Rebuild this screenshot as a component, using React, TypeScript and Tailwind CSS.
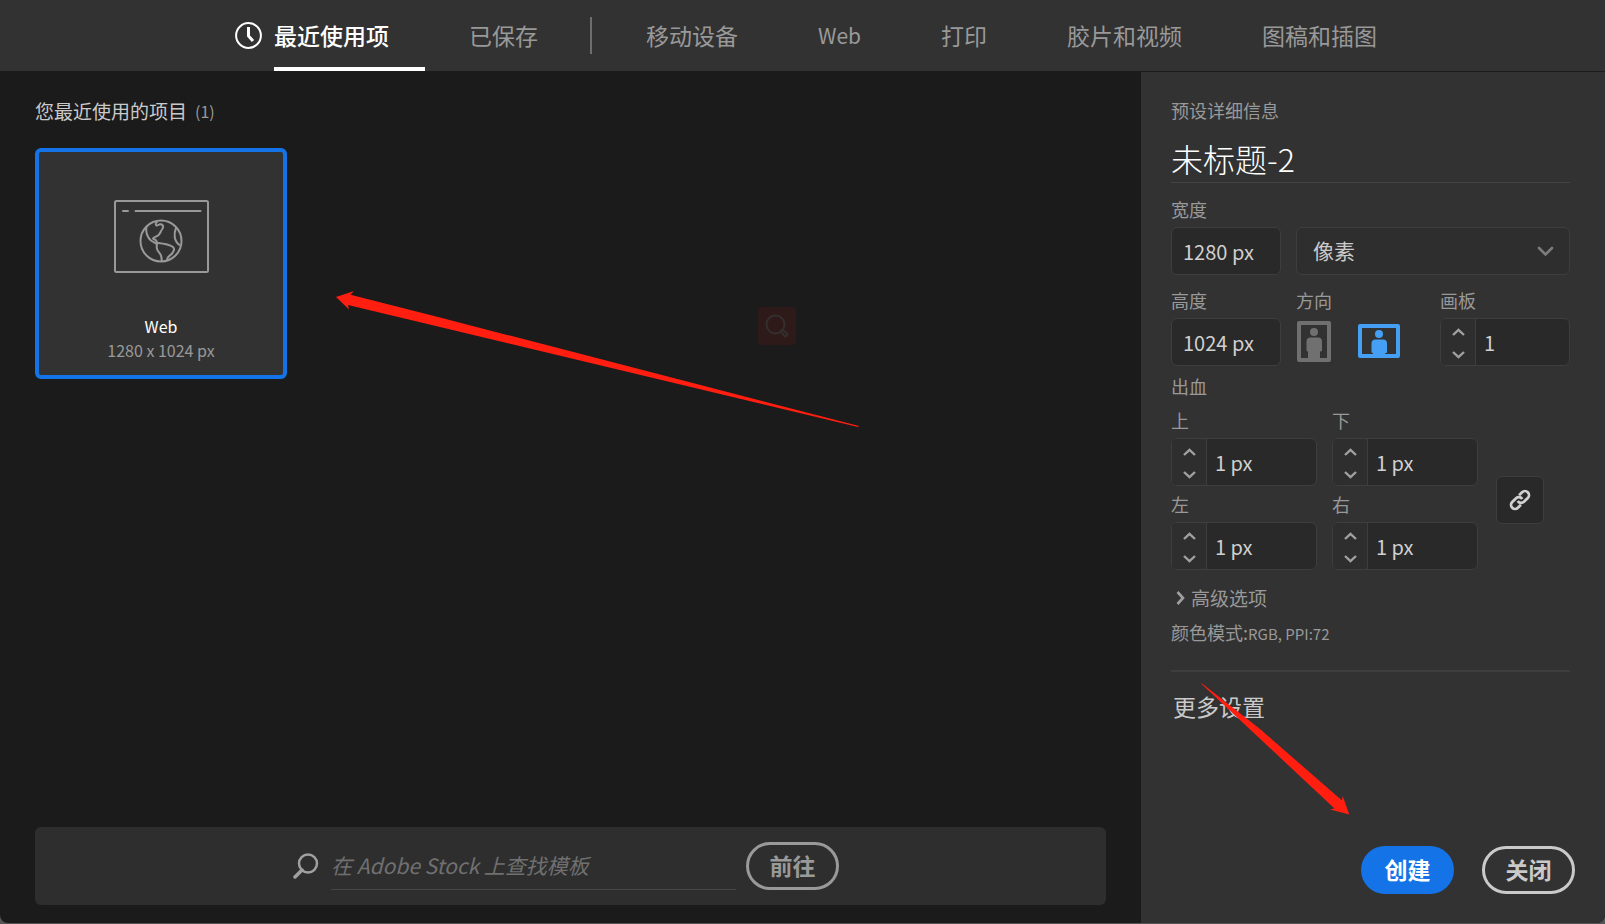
import { useState } from "react";

const tabs = [
  { label: "最近使用项", className: "ml-3 text-[23px]" },
  { label: "已保存", className: "ml-11 text-[23px]" },
  { label: "移动设备", className: "ml-[54px] text-[23px]" },
  { label: "Web", className: "ml-20 text-[21px]" },
  { label: "打印", className: "ml-20 text-[23px]" },
  { label: "胶片和视频", className: "ml-20 text-[23px]" },
  { label: "图稿和插图", className: "ml-20 text-[23px]" },
];

const RED = "#ff1e10";

function ClockIcon() {
  return (
    <svg width="27" height="27" viewBox="0 0 27 27" fill="none" stroke="#fff" strokeWidth="2" aria-hidden="true">
      <circle cx="13.5" cy="13.5" r="12.4" />
      <path d="M13.5 5v9l4.5 5" strokeWidth="3" />
    </svg>
  );
}

function WebPresetIcon() {
  return (
    <svg width="95" height="73" viewBox="0 0 95 73" fill="none" stroke="#999" strokeWidth="2" strokeLinecap="round" strokeLinejoin="round" aria-hidden="true">
      <rect x="1" y="1" width="93" height="71" rx="1.5" />
      <path d="M9 11h5M21.500 11h65" />
      <circle cx="47" cy="41" r="20.500" />
      <path d="M43 22c-1.500 1-1.500 2.500-.5 3.500 1.500.5 2-1.500 4-1.200 3.500.5 3 3 1.500 5.200-1.500 2-1.500 4-4 6-2 1.500-4.500 1.500-5 3 .5 1.500 2.500.5 3 2l1.500 2.500c5 .5 11 1 15.500 4 2.500 2.500.5 3.500-.5 6-1.500 2.500-5 2.500-5.500 7" />
      <path d="M32.500 27c-1 5 1 11 4.500 13.500 3 2 6 3 6 4.500-1 3 0 4 1 6 2 3 4.500 4 3.500 10" />
      <path d="M62 28c-2.500 6-2 13 3.500 17" />
    </svg>
  );
}

function PortraitIcon() {
  return (
    <svg width="34" height="41" viewBox="0 0 34 41" aria-hidden="true">
      <path d="M2 2h30v37H2z" fill="none" stroke="#707070" strokeWidth="4" strokeLinejoin="round" />
      <circle cx="17" cy="11" r="4" fill="#707070" />
      <path d="M13 16.500h8a4 4 0 0 1 4 4V29a1.500 1.500 0 0 1-2 1.500V38H11v-7.500A1.500 1.500 0 0 1 9.500 29v-8.500a4 4 0 0 1 3.500-4z" fill="#707070" />
    </svg>
  );
}

function LandscapeIcon() {
  return (
    <svg width="42" height="34" viewBox="0 0 42 34" aria-hidden="true">
      <path d="M2 2h38v30H2z" fill="none" stroke="#459ff5" strokeWidth="4" strokeLinejoin="round" />
      <circle cx="21" cy="10" r="4" fill="#459ff5" />
      <path d="M17 15.500h8a4 4 0 0 1 4 4V27a1.500 1.500 0 0 1-2 2v3H15v-3a1.500 1.500 0 0 1-1.500-2v-7.500a4 4 0 0 1 3.500-4z" fill="#459ff5" />
    </svg>
  );
}

function Caret({ up = false }: { up?: boolean }) {
  return (
    <svg width="13" height="8" viewBox="0 0 13 8" fill="none" stroke="#a0a0a0" strokeWidth="2.400" aria-hidden="true">
      <path d={up ? "M1 7l5.500-5.200L12 7" : "M1 1l5.500 5.200L12 1"} />
    </svg>
  );
}

function Stepper({ id, label, value, className }: { id: string; label: string; value: string; className: string }) {
  return (
    <div className={className}>
      <label htmlFor={id} className="block h-7 text-lg leading-5">{label}</label>
      <div className="flex h-12 overflow-hidden rounded-md border border-[#3e3e3e] bg-[#292929]">
        <div className="flex w-[35px] shrink-0 flex-col border-r border-[#3e3e3e] bg-[#2e2e2e]">
          <button type="button" aria-label={`${label} +`} className="flex flex-1 items-center justify-center pt-0.5"><Caret up /></button>
          <button type="button" aria-label={`${label} -`} className="flex flex-1 items-center justify-center pt-0.5"><Caret /></button>
        </div>
        <input id={id} defaultValue={value} className="w-full min-w-0 bg-transparent px-2 pt-0.5 text-xl text-[#d0d0d0] outline-none" />
      </div>
    </div>
  );
}

function SizeField({ id, label, value }: { id: string; label: string; value: string }) {
  return (
    <div className="w-[110px]">
      <label htmlFor={id} className="block h-7 text-lg leading-5">{label}</label>
      <input id={id} defaultValue={value} className="block h-12 w-full rounded-md border border-[#3e3e3e] bg-[#292929] px-[11px] text-xl text-[#d0d0d0] outline-none" />
    </div>
  );
}

function TopTabs() {
  const [active, setActive] = useState(0);
  return (
    <nav className="flex h-[71px] shrink-0 items-center whitespace-nowrap bg-[#323232] pl-[235px]">
      <ClockIcon />
      {tabs.map((tab, i) => (
        <div key={tab.label} className={`flex h-full items-center ${tab.className}`}>
          <button
            type="button"
            onClick={() => setActive(i)}
            className={`h-full border-y-4 border-t-transparent ${i === 0 ? "w-[151px] text-left" : ""} ${i === active ? "border-b-white font-medium text-white" : "border-b-transparent text-[#999]"}`}
          >
            {tab.label}
          </button>
          {i === 1 && <span className="ml-13 h-[37px] w-0.5 bg-[#6e6e6e]" />}
        </div>
      ))}
    </nav>
  );
}

function RecentPanel() {
  return (
    <main className="relative flex min-w-0 flex-1 flex-col px-[35px] pb-[18px] pt-7">
      <h2 className="flex h-6 items-center gap-2 text-[19px] text-[#cacaca]">
        您最近使用的项目 <span className="text-base text-[#999]">(1)</span>
      </h2>
      <button type="button" className="mt-[25px] flex h-[231px] w-[252px] flex-col items-center rounded-md border-4 border-[#1473e6] bg-[#323232] pt-12">
        <WebPresetIcon />
        <span className="mt-[41px] text-base leading-6 text-white">Web</span>
        <span className="text-base leading-6 text-[#999]">1280 x 1024 px</span>
      </button>

      <div className="absolute left-[758px] top-[236px] flex size-[38px] items-center justify-center rounded bg-[#2f1a1a]">
        <svg width="24" height="24" viewBox="0 0 24 24" fill="none" stroke="#342f2f" strokeWidth="2" aria-hidden="true">
          <circle cx="10.500" cy="10.500" r="9" />
          <path d="M15.500 17.500l2-2 4.500 4a1.800 1.800 0 0 1-2.500 2.500z" />
        </svg>
      </div>
      <svg className="pointer-events-none absolute left-[335px] top-[219px]" width="525" height="138" viewBox="0 0 525 138" aria-hidden="true">
        <path d="M1 7L19 1l-3.500 3.700L105 27.500 524 136l-1 1L105 37 13 15l1 4.500z" fill={RED} />
      </svg>

      <form className="mt-auto flex h-[78px] items-center rounded-md bg-[#2e2e2e] pl-[258px]" onSubmit={(e) => e.preventDefault()}>
        <svg width="26" height="26" viewBox="0 0 26 26" fill="none" stroke="#a0a0a0" aria-hidden="true">
          <circle cx="15" cy="10.500" r="9" strokeWidth="2.500" />
          <path d="M9 17l-7 7" strokeWidth="3.500" strokeLinecap="round" />
        </svg>
        <input
          type="search"
          aria-label="在 Adobe Stock 上查找模板"
          placeholder="在 Adobe Stock 上查找模板"
          className="ml-3 h-12 w-[405px] border-b border-[#464646] bg-transparent pb-0.5 text-[21px] italic text-[#ccc] outline-none placeholder:text-[#707070]"
        />
        <button type="submit" className="ml-2.5 h-12 w-[93px] rounded-full border-3 border-[#999] pb-0.5 text-[23px] font-bold leading-none text-[#999]">前往</button>
      </form>
    </main>
  );
}

function DetailsPanel() {
  return (
    <aside className="relative mt-px flex w-[464px] shrink-0 flex-col bg-[#323232] pb-[29px] pl-[30px] pr-[35px] pt-[26px] text-[#999]">
      <h3 className="text-lg leading-6">预设详细信息</h3>
      <input aria-label="名称" defaultValue="未标题-2" className="mt-3 block h-[49px] w-full border-b border-[#444] bg-transparent text-[32px] font-light text-white outline-none" />

      <div className="mt-4 flex gap-[15px]">
        <SizeField id="doc-width" label="宽度" value="1280 px" />
        <div className="relative flex flex-1 items-end">
          <select aria-label="单位" className="h-12 w-full appearance-none rounded-md border border-[#3e3e3e] bg-[#2e2e2e] px-4 text-[21px] text-[#cacaca] outline-none">
            <option>像素</option>
          </select>
          <svg className="pointer-events-none absolute bottom-[18px] right-4" width="17" height="11" viewBox="0 0 17 11" fill="none" stroke="#7c7c7c" strokeWidth="2.600" strokeLinecap="round" aria-hidden="true">
            <path d="M2 2l6.500 6.500L15 2" />
          </svg>
        </div>
      </div>

      <div className="mt-[15px] flex">
        <SizeField id="doc-height" label="高度" value="1024 px" />
        <div className="ml-[15px]">
          <div className="h-7 text-lg leading-5">方向</div>
          <div className="flex h-12 items-center gap-[27px] pb-0.5 pl-px">
            <button type="button" aria-label="纵向"><PortraitIcon /></button>
            <button type="button" aria-label="横向" aria-pressed="true"><LandscapeIcon /></button>
          </div>
        </div>
        <Stepper id="artboards" label="画板" value="1" className="ml-auto w-[130px]" />
      </div>

      <div className="mt-2 text-lg leading-6">出血</div>
      <div className="flex items-center">
        <div className="mt-3 grid grid-cols-2 gap-x-[15px] gap-y-2">
          <Stepper id="bleed-top" label="上" value="1 px" className="w-[146px]" />
          <Stepper id="bleed-bottom" label="下" value="1 px" className="w-[146px]" />
          <Stepper id="bleed-left" label="左" value="1 px" className="w-[146px]" />
          <Stepper id="bleed-right" label="右" value="1 px" className="w-[146px]" />
        </div>
        <button type="button" aria-label="链接" className="ml-[18px] mt-8 flex size-12 items-center justify-center rounded-md border border-[#3e3e3e] bg-[#292929]">
          <svg width="22" height="22" viewBox="0 0 24 24" fill="none" stroke="#d0d0d0" strokeWidth="3" aria-hidden="true">
            <path d="M9.500 13a4.500 4.500 0 0 0 6.800 1l4.200-4.200a4.300 4.300 0 0 0-6.200-6.200L11 6.800" />
            <path d="M14.500 11a4.500 4.500 0 0 0-6.800-1l-4.200 4.200a4.300 4.300 0 0 0 6.200 6.200L13 17.200" />
          </svg>
        </button>
      </div>

      <button type="button" className="mt-3.5 flex items-center gap-1.5 self-start pl-[5px] text-[19px] leading-7">
        <svg width="9" height="14" viewBox="0 0 9 14" fill="none" stroke="#a0a0a0" strokeWidth="2.600" aria-hidden="true">
          <path d="M1.500 1l5.500 6-5.500 6" />
        </svg>
        高级选项
      </button>
      <p className="mt-2 text-lg leading-6">颜色模式:<span className="text-[15px]">RGB, PPI:72</span></p>

      <hr className="mt-6 border-t-2 border-[#3e3e3e]" />
      <button type="button" className="mt-[18px] self-start pl-0.5 text-[23px] leading-8 text-[#cacaca]">更多设置</button>

      <div className="-mr-[5px] mt-auto flex justify-end gap-7">
        <button type="button" className="h-12 w-[93px] rounded-full bg-[#1473e6] pb-0.5 text-[23px] font-bold leading-none text-white">创建</button>
        <button type="button" className="h-12 w-[93px] rounded-full border-3 border-[#cacaca] pb-0.5 text-[23px] font-bold leading-none text-[#cacaca]">关闭</button>
      </div>

      <svg className="pointer-events-none absolute left-[59px] top-[611px]" width="151" height="133" viewBox="0 0 151 133" aria-hidden="true">
        <path d="M1 .5L2 .5 60 46l82 71.500.7-4.500 6.600 18.500L130 126.500l4.500-1L56 52z" fill={RED} />
      </svg>
    </aside>
  );
}

export default function App() {
  return (
    <div className="bg-[#555] pb-px font-['Noto_Sans_CJK_SC',sans-serif]">
      <div className="flex min-h-[calc(100vh-1px)] flex-col overflow-hidden rounded-b-lg bg-[#1b1b1b]">
        <TopTabs />
        <div className="flex flex-1">
          <RecentPanel />
          <DetailsPanel />
        </div>
      </div>
    </div>
  );
}
